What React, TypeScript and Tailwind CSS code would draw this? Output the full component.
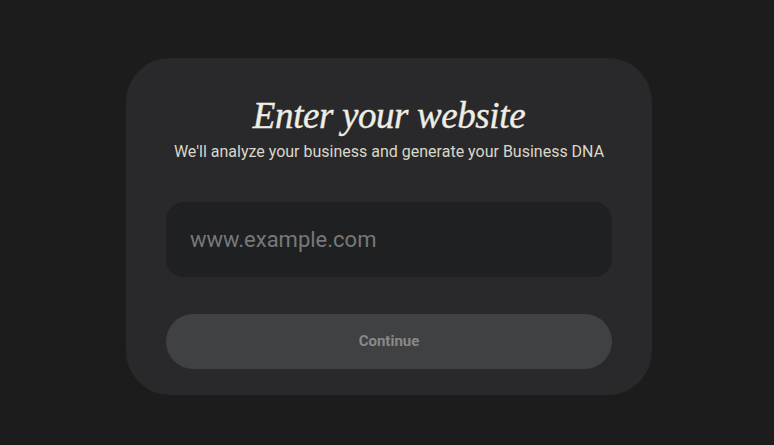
import { useState, ChangeEvent } from "react";

export default function App() {
  const [website, setWebsite] = useState("");

  const handleChange = (e: ChangeEvent<HTMLInputElement>) => {
    setWebsite(e.target.value);
  };

  return (
    <div className="min-h-screen w-full flex items-center justify-center bg-[#1c1c1d] pt-[8px] pl-[4px]">
      <div className="w-[526px] rounded-[44px] bg-[#29292b] px-10 pt-[35px] pb-[26px] flex flex-col items-center">
        <h1 className="font-['Liberation_Serif',serif] italic text-[37px] leading-[46px] text-[#efede4] tracking-[-0.4px] [-webkit-text-stroke:0.4px_#efede4]">
          Enter your website
        </h1>
        <p className="mt-[3px] font-['Roboto',sans-serif] text-[16px] leading-[20px] text-[#d9d7c9]">
          We'll analyze your business and generate your Business DNA
        </p>
        <input
          type="text"
          name="website"
          value={website}
          onChange={handleChange}
          placeholder="www.example.com"
          className="mt-[40px] w-full h-[75px] rounded-[18px] bg-[#1f2022] px-6 font-['Roboto',sans-serif] text-[22px] text-[#d9d7c9] placeholder:text-[#77787a] outline-none"
        />
        <button className="mt-[37px] w-full h-[55px] rounded-full bg-[#404143] font-['Roboto',sans-serif] text-[15px] font-bold text-[#88898a]">
          Continue
        </button>
      </div>
    </div>
  );
}
